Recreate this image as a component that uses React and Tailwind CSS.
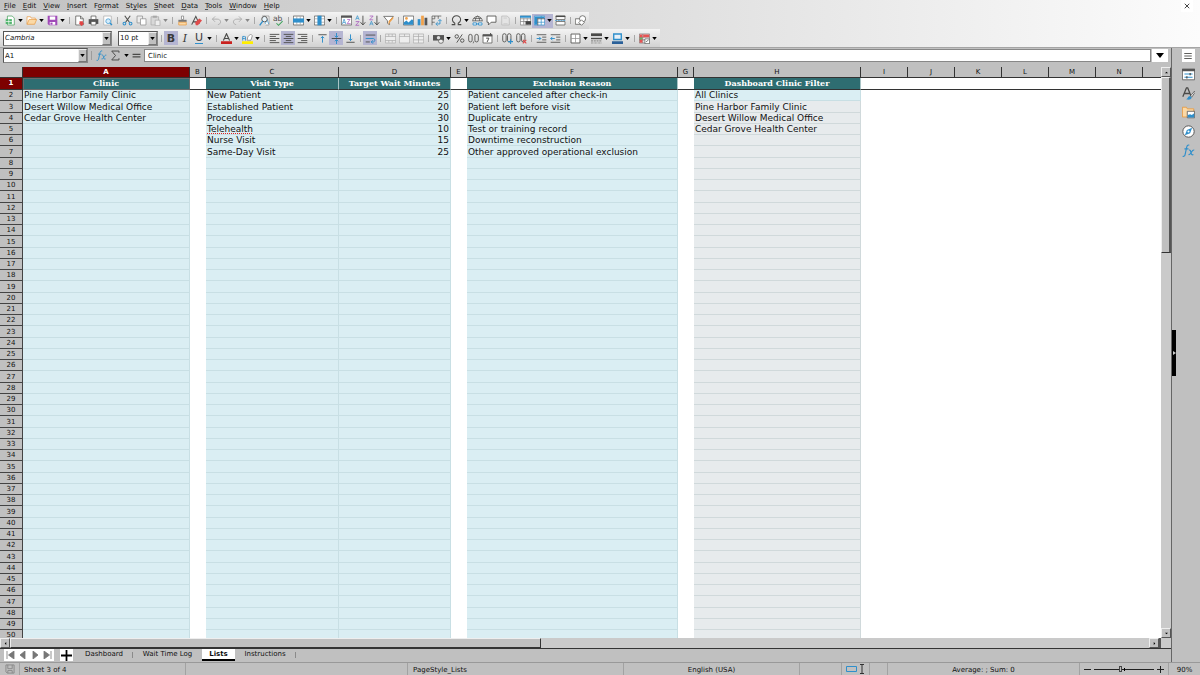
import clsx from "clsx";

const BLUE = "#2f8fcb";
const DARK = "#4a4a48";
const GRAY = "#a8a8a8";

const menus = [
  "File", "Edit", "View", "Insert", "Format", "Styles",
  "Sheet", "Data", "Tools", "Window", "Help",
];

// index of the underlined letter, where it is not the first one
const accessKeys = { Format: 1, Styles: 2 };

const paths = {
  newDoc: (
    <>
      <path d="M3.500 1.500h7l3 3v10h-10z" fill="#fff" stroke="#3f9c55" />
      <path d="M1 6h9v7H1z" fill="#4db36a" />
      <path d="M1 9.500h9M5.500 6v7" stroke="#fff" />
    </>
  ),
  open: (
    <>
      <path d="M1.500 13.500v-11h5l1 2h6v3" fill="#fff" stroke="#e8963a" />
      <path d="M1.500 13.500l3-7h11l-3 7z" fill="#fbd9a6" stroke="#e8963a" />
    </>
  ),
  save: (
    <>
      <path d="M1 1h14v14H3l-2-2z" fill="#a04bb8" />
      <path d="M4 2h8v5H4zM4 10h8v4H4z" fill="#fff" />
      <path d="M5 11h3v3H5z" fill="#a04bb8" />
    </>
  ),
  pdf: (
    <>
      <path d="M2.500 1.500h7l4 4v9h-11z" fill="#fff" stroke={DARK} />
      <path d="M9.500 1.500v4h4" fill="none" stroke={DARK} />
      <path d="M8 9h5v3h2l-4 4-4-4h1z" fill="#e04444" />
    </>
  ),
  print: (
    <>
      <path d="M4.500 6V1.500h7V6" fill="#fff" stroke={DARK} />
      <path d="M1 6h14v7H1z" fill="#555" />
      <path d="M4.500 9.500h7v5h-7z" fill="#fff" stroke={DARK} />
    </>
  ),
  preview: (
    <>
      <path d="M2.500 1.500h11v13h-11z" fill="#fff" stroke={GRAY} />
      <circle cx="9" cy="9" r="3.500" fill="#d5ecfa" stroke={BLUE} />
      <path d="M11.500 11.500l3 3" stroke={BLUE} strokeWidth="2" />
    </>
  ),
  cut: (
    <>
      <path d="M4 1l7 10M12 1L5 11" stroke={DARK} strokeWidth="1.500" />
      <circle cx="3.500" cy="12.500" r="2" fill="none" stroke={BLUE} strokeWidth="1.500" />
      <circle cx="12.500" cy="12.500" r="2" fill="none" stroke={BLUE} strokeWidth="1.500" />
    </>
  ),
  copy: (
    <>
      <path d="M1.500 1.500h8v10h-8z" fill="#eee" stroke="#888" />
      <path d="M6.500 5.500h8v9h-8z" fill="#fff" stroke="#888" />
    </>
  ),
  paste: (
    <>
      <path d="M1.500 2.500h11v12h-11z" fill="#d8d8d8" stroke={GRAY} />
      <path d="M4 1h6v3H4z" fill={GRAY} />
      <path d="M7.500 7.500h7v8h-7z" fill="#eee" stroke={GRAY} />
    </>
  ),
  clone: (
    <>
      <path d="M6.500 1.500h3v5h-3z" fill="#fff" stroke="#777" />
      <path d="M2 7h12v3H2z" fill="#777" />
      <path d="M2.500 10.500h11v4h-11z" fill="#fbd9a6" stroke="#e8963a" />
    </>
  ),
  clear: (
    <>
      <path d="M1 14L7 2l5 11M3 10h6" fill="none" stroke={DARK} strokeWidth="1.500" />
      <path d="M6 11l6-6 4 3-6 7H7z" fill="#e04b4b" />
    </>
  ),
  undo: <path d="M6 2L2 6l4 4M2 6h7c3 0 5 2 5 4s-2 4-4 4" fill="none" stroke={GRAY} strokeWidth="1.200" />,
  redo: <path d="M10 2l4 4-4 4M14 6H7C4 6 2 8 2 10s2 4 4 4" fill="none" stroke={GRAY} strokeWidth="1.200" />,
  find: (
    <>
      <path d="M4.500 1.500h10v13h-5" fill="#fff" stroke="#888" />
      <path d="M9 13l2.500-7 2.500 7" fill="none" stroke={BLUE} />
      <circle cx="8" cy="6" r="4" fill="#e8f4fb" stroke={DARK} strokeWidth="1.300" />
      <path d="M5.500 9L1 15" stroke={BLUE} strokeWidth="2" />
    </>
  ),
  spell: (
    <>
      <text x="0" y="9" fontSize="11" fill={DARK}>ab</text>
      <path d="M5 12l3 3 6-6" fill="none" stroke="#3fa35b" strokeWidth="1.500" />
    </>
  ),
  row: (
    <>
      <path d="M.5 1.500h15v13H.5z" fill="#fff" stroke={DARK} />
      <path d="M5.500 2v12M10.500 2v12" stroke="#999" />
      <path d="M0 5h16v6H0z" fill={BLUE} />
    </>
  ),
  column: (
    <>
      <path d="M.5 1.500h15v13H.5z" fill="#fff" stroke={DARK} />
      <path d="M1 5.500h14M1 10.500h14" stroke="#999" />
      <path d="M5 1h6v14H5z" fill={BLUE} />
    </>
  ),
  sort: (
    <>
      <path d="M.5 1.500h15v13H.5z" fill="#fff" stroke={DARK} />
      <path d="M0 1h16v3H0z" fill="#555" />
      <path d="M2 13l2.500-7L7 13M3 11h3" fill="none" stroke={BLUE} />
      <path d="M9 6.500h4L9 12.500h5" fill="none" stroke="#a04bb8" />
    </>
  ),
  sortAsc: (
    <>
      <path d="M1 7l2.500-6L6 7M2 5h3" fill="none" stroke={BLUE} />
      <path d="M1 9.500h5L1 15h5" fill="none" stroke="#a04bb8" />
      <path d="M11.500 1v13M8 10.500l3.500 4 3.500-4" fill="none" stroke={DARK} strokeWidth="1.300" />
    </>
  ),
  sortDesc: (
    <>
      <path d="M1 1.500h5L1 7h5" fill="none" stroke="#a04bb8" />
      <path d="M1 15l2.500-6L6 15M2 13h3" fill="none" stroke={BLUE} />
      <path d="M11.500 1v13M8 10.500l3.500 4 3.500-4" fill="none" stroke={DARK} strokeWidth="1.300" />
    </>
  ),
  filter: (
    <>
      <path d="M1 2h14L9.500 8.500V14l-3-2V8.500z" fill="#fff" stroke={DARK} />
      <path d="M8 9l7-7v3l-5 6-2 4z" fill="#f0a24c" />
    </>
  ),
  image: (
    <>
      <path d="M.5 1.500h15v13H.5z" fill="#fff" stroke={DARK} />
      <circle cx="5" cy="5" r="2" fill="#f0a24c" />
      <path d="M1 14v-3l4-3 3 3 5-5 2 2v6z" fill={BLUE} />
    </>
  ),
  chart: (
    <>
      <path d="M1 6h4v9H1z" fill={BLUE} />
      <path d="M6 1h4v14H6z" fill="#f0a24c" />
      <path d="M11 4h4v11h-4z" fill="#555" />
    </>
  ),
  pivot: (
    <>
      <path d="M1.500 15V1.500H15M1.500 5.500h4M5.500 1.500v4M1.500 10.500h4M10.500 1.500v4" fill="none" stroke={DARK} />
      <path d="M8 13h5V7M10.500 9L13 6.500 15.500 9M9.500 10.500L7 13l2.500 2.500" fill="none" stroke={BLUE} strokeWidth="1.300" />
    </>
  ),
  omega: <path d="M1 14h4.500v-2C3 10.500 2 9 2 7a6 6 0 0 1 12 0c0 2-1 3.500-3.500 5v2H15" fill="none" stroke={DARK} strokeWidth="1.500" />,
  link: (
    <>
      <path d="M1 9a7 7 0 0 1 14 0M1 8.500h14M5 8.500c0-4 1-6 3-7 2 1 3 3 3 7M2.500 5h11" fill="none" stroke={DARK} />
      <path d="M1.500 11.500h5v3h-5zM9.500 11.500h5v3h-5zM6 13h4" fill="#fff" stroke={BLUE} strokeWidth="1.300" />
    </>
  ),
  comment: <path d="M1.500 1.500h13v9h-7l-4 4v-4h-2z" fill="#fff" stroke={DARK} strokeWidth="1.200" />,
  headerFooter: (
    <>
      <path d="M2.500 1.500h8l3 3v10h-11z" fill="#e4e4e4" stroke="#b5b5b5" />
      <path d="M5 4.500h5M5 12.500h6" stroke="#c4c4c4" />
    </>
  ),
  printArea: (
    <>
      <path d="M.5 1.500h15v13H.5zM.5 5.500h15M.5 9.500h15M5.500 5v9M10.500 5v9" fill="#fff" stroke="#777" />
      <path d="M0 1h16v3H0z" fill={BLUE} />
      <path d="M8 9h8v5H8z" fill="#444" />
    </>
  ),
  freeze: (
    <>
      <path d="M.5 1.500h15v13H.5zM.5 10.500h15M10.500 1.500v13" fill="#fff" stroke={BLUE} />
      <path d="M1 2h14v3H1zM1 2h4v12H1z" fill={BLUE} />
      <path d="M5.500 5v10M5 5.500h11" stroke={DARK} />
    </>
  ),
  split: (
    <>
      <path d="M1.500 1.500h13v5h-13zM1.500 9.500h13v5h-13z" fill="#fff" stroke={DARK} />
      <path d="M1 1h14v2H1z" fill={DARK} />
      <path d="M0 8h16" stroke={BLUE} strokeDasharray="3 1" />
    </>
  ),
  shapes: (
    <>
      <path d="M.5 5.500h8v8h-8z" fill="#fff" stroke={DARK} />
      <circle cx="11" cy="5.500" r="4.500" fill="#fff" stroke={DARK} />
      <path d="M9.500 7l4 4-4 4-4-4z" fill="#fff" stroke={DARK} />
    </>
  ),
  fontColor: (
    <>
      <path d="M3.500 11L8 1l4.500 10M5 8h6" fill="none" stroke={DARK} strokeWidth="1.600" />
      <path d="M0 12h16v4H0z" fill="#c9211e" />
    </>
  ),
  highlight: (
    <>
      <path d="M1 11V5h3M1 8h3M5 11V5" fill="none" stroke={BLUE} strokeWidth="1.300" />
      <path d="M7.500 10.500l1-5 4-4 2.500 2.500-2 6.500z" fill="#fff" stroke="#777" />
      <path d="M0 12h16v4H0z" fill="#ffee00" />
    </>
  ),
  alignLeft: <path d="M1 2h14M1 5h9M1 8h14M1 11h9M1 14h14" stroke={DARK} strokeWidth="1.300" />,
  alignCenter: <path d="M1 2h14M4 5h8M1 8h14M4 11h8M1 14h14" stroke={DARK} strokeWidth="1.300" />,
  alignRight: <path d="M1 2h14M6 5h9M1 8h14M6 11h9M1 14h14" stroke={DARK} strokeWidth="1.300" />,
  top: (
    <>
      <path d="M2 2.500h12" stroke={DARK} strokeWidth="1.300" />
      <path d="M8 14V5M5.500 7.500L8 5l2.500 2.500" fill="none" stroke={BLUE} strokeWidth="1.400" />
    </>
  ),
  middle: (
    <>
      <path d="M1 8h14" stroke={DARK} strokeWidth="1.400" />
      <path d="M8 0v6M5.500 4L8 6.500 10.500 4M8 16v-6M5.500 12L8 9.500l2.500 2.500" fill="none" stroke={BLUE} strokeWidth="1.400" />
    </>
  ),
  bottom: (
    <>
      <path d="M2 13.500h12" stroke={DARK} strokeWidth="1.300" />
      <path d="M8 2v9M5.500 8.500L8 11l2.500-2.500" fill="none" stroke={BLUE} strokeWidth="1.400" />
    </>
  ),
  wrap: (
    <>
      <path d="M1 3h14M1 13h6" stroke={DARK} strokeWidth="1.300" />
      <path d="M1 8h11c3 0 3 5 0 5H9M11.500 10.500L9 13l2.500 2.500" fill="none" stroke={BLUE} strokeWidth="1.400" />
    </>
  ),
  merge: <path d="M.5 1.500h15v13H.5zM.5 5h15M.5 11h15M5.500 1.500V5M10.500 1.500V5M5.500 11v3M10.500 11v3" fill="#eee" stroke={GRAY} />,
  mergeCells: <path d="M.5 1.500h15v13H.5zM.5 5h15M8 1.500V5" fill="#eee" stroke={GRAY} />,
  splitCells: <path d="M.5 1.500h15v13H.5zM.5 5h15M.5 10h15M8 1.500v13" fill="#eee" stroke={GRAY} />,
  currency: (
    <>
      <path d="M0 3h16v8H0z" fill="#555" />
      <circle cx="8" cy="7" r="2.500" fill="#ddd" />
      <ellipse cx="11.500" cy="12" rx="3.500" ry="3" fill="#eee" stroke={DARK} />
    </>
  ),
  percent: (
    <>
      <circle cx="4" cy="5" r="2.500" fill="none" stroke={DARK} strokeWidth="1.300" />
      <circle cx="12" cy="11" r="2.500" fill="none" stroke={DARK} strokeWidth="1.300" />
      <path d="M12 2L4 14" stroke={DARK} strokeWidth="1.300" />
    </>
  ),
  number: (
    <>
      <rect x="1" y="2" width="5" height="11" rx="2.500" fill="none" stroke={DARK} strokeWidth="1.200" />
      <rect x="10" y="2" width="5" height="11" rx="2.500" fill="none" stroke={DARK} strokeWidth="1.200" />
      <path d="M8.500 12l-1 3" stroke={DARK} />
    </>
  ),
  date: (
    <>
      <path d="M1.500 2.500h13v12h-13z" fill="#fff" stroke={DARK} />
      <path d="M1 2h14v3H1z" fill="#555" />
      <path d="M6 7.500h4L7.500 13M12.500 0v3" fill="none" stroke={DARK} strokeWidth="1.400" />
    </>
  ),
  addDecimal: (
    <>
      <rect x="1" y="1" width="5" height="12" rx="2.500" fill="none" stroke={DARK} strokeWidth="1.200" />
      <rect x="8" y="1" width="5" height="12" rx="2.500" fill="none" stroke={DARK} strokeWidth="1.200" />
      <path d="M12.500 9v7M9 12.500h7" stroke={BLUE} strokeWidth="1.600" />
    </>
  ),
  removeDecimal: (
    <>
      <rect x="1" y="1" width="5" height="12" rx="2.500" fill="none" stroke={DARK} strokeWidth="1.200" />
      <rect x="8" y="1" width="5" height="12" rx="2.500" fill="none" stroke={DARK} strokeWidth="1.200" />
      <path d="M10 10l5 5M15 10l-5 5" stroke="#e04444" strokeWidth="1.500" />
    </>
  ),
  indent: (
    <>
      <path d="M1 2.500h14M9 6h6M9 10h6M1 13.500h14" stroke={DARK} strokeWidth="1.200" />
      <path d="M1 8h6M4.500 5.500L7 8l-2.500 2.500" fill="none" stroke={BLUE} strokeWidth="1.400" />
    </>
  ),
  outdent: (
    <>
      <path d="M1 2.500h14M9 6h6M9 10h6M1 13.500h14" stroke={DARK} strokeWidth="1.200" />
      <path d="M1 8h6M3.500 5.500L1 8l2.500 2.500" fill="none" stroke={BLUE} strokeWidth="1.400" />
    </>
  ),
  borders: (
    <>
      <path d="M1.500 1.500h13v13h-13z" fill="#fff" stroke={DARK} strokeWidth="1.200" />
      <path d="M8 2v12M2 8h12" stroke="#888" />
    </>
  ),
  borderStyle: (
    <>
      <path d="M0 2.500h16" stroke={DARK} strokeWidth="4" />
      <path d="M0 8h16" stroke={DARK} strokeWidth="2" />
      <path d="M0 11.500h16" stroke={DARK} strokeDasharray="3 1" />
      <path d="M0 14.500h16" stroke={DARK} strokeDasharray="1 1" />
    </>
  ),
  borderColor: (
    <>
      <path d="M2.500 1.500h11v8h-11z" fill="#e8f1f8" stroke={BLUE} strokeWidth="2" />
      <path d="M0 12h16v4H0z" fill="#2a6099" />
    </>
  ),
  conditional: (
    <>
      <path d="M.5 1.500h15v13H.5zM5.500 1.500v13M.5 6h15M.5 10h15" fill="#fff" stroke="#666" />
      <path d="M1 2h4v12H1zM6 2h9v4H6z" fill="#e55353" />
      <path d="M1 6.500h4v3H1z" fill="#5cb56f" />
      <path d="M8.500 8.500h7v7h-7zM10 13l4-3" fill="#fff" stroke={DARK} />
    </>
  ),
  properties: (
    <>
      <path d="M.5 1.500h15v13H.5z" fill="#fff" stroke="#555" />
      <path d="M0 1h16v3H0z" fill="#555" />
      <path d="M3 7.500h10M3 11.500h10" stroke={BLUE} strokeWidth="1.300" />
      <path d="M10 6v3M6 10v3" stroke={DARK} strokeWidth="1.500" />
    </>
  ),
  styles: (
    <>
      <path d="M1 12L5.500 1H7l4 10M3 8h6" fill="none" stroke={DARK} strokeWidth="1.600" />
      <path d="M15.500 5l-5 6 1.500 1.500 4-6z" fill="#fff" stroke="#555" />
      <path d="M5 15c2 0 2-4 5-4l2 2c-1 3-4 3-7 2z" fill={BLUE} />
    </>
  ),
  gallery: (
    <>
      <path d="M.5 13.500v-12h5l1 2h8v10z" fill="#fbd9a6" stroke="#e8963a" />
      <path d="M6.500 6.500h9v8h-9z" fill="#fff" stroke="#555" />
      <path d="M7 14v-3l3-1 2 1 3-2v5z" fill={BLUE} />
    </>
  ),
  navigator: (
    <>
      <circle cx="8" cy="8" r="7" fill="#fff" stroke="#555" strokeWidth="1.200" />
      <path d="M12.500 3.500L10 10l-6.500 2.500L6 6z" fill={BLUE} />
      <circle cx="8" cy="8" r="1.300" fill="#fff" />
    </>
  ),
  functions: (
    <>
      <path d="M9 1.500C6.500.5 6 3 5.500 5L3.800 13c-.4 2-1.500 2.500-3 2M3 6h5" fill="none" stroke={BLUE} strokeWidth="1.400" />
      <path d="M8.500 7.500c2-.5 2 1 2.500 3s1 3.500 3 2.500M15 7.500c-2-.5-3 2-4 3.500s-1.500 2.500-3 2" fill="none" stroke={BLUE} strokeWidth="1.400" />
    </>
  ),
  sigma: <path d="M13 4V1.500H2.500L8 8l-5.500 6.500H13V12" fill="none" stroke={DARK} strokeWidth="1.400" />,
  equals: <path d="M1 6h14M1 10.500h14" stroke={DARK} strokeWidth="2" />,
  menu: <path d="M2 4h12M2 8h12M2 12h12" stroke={DARK} strokeWidth="1.400" />,
};

// "|" is a separator; [icon, label, flags]: c = caret, p = pressed, d = disabled
const standardBar = [
  ["newDoc", "New", "c"], ["open", "Open", "c"], ["save", "Save", "c"], "|",
  ["pdf", "Export as PDF"], ["print", "Print"], ["preview", "Print Preview"], "|",
  ["cut", "Cut"], ["copy", "Copy"], ["paste", "Paste", "cd"], "|",
  ["clone", "Clone Formatting"], ["clear", "Clear Formatting"], "|",
  ["undo", "Undo", "cd"], ["redo", "Redo", "cd"], "|",
  ["find", "Find and Replace"], ["spell", "Spelling"], "|",
  ["row", "Row", "c"], ["column", "Column", "c"], "|",
  ["sort", "Sort"], ["sortAsc", "Sort Ascending"], ["sortDesc", "Sort Descending"], ["filter", "AutoFilter"], "|",
  ["image", "Insert Image"], ["chart", "Insert Chart"], ["pivot", "Pivot Table"], "|",
  ["omega", "Special Character", "c"], ["link", "Hyperlink"], ["comment", "Comment"], ["headerFooter", "Headers and Footers", "d"], "|",
  ["printArea", "Print Area"], ["freeze", "Freeze Rows and Columns", "cp"], ["split", "Split Window"], "|",
  ["shapes", "Draw Functions"],
];

const formatBar = [
  ["B", "Bold", "p"], ["I", "Italic"], ["U", "Underline", "c"], "|",
  ["fontColor", "Font Color", "c"], ["highlight", "Background Color", "c"], "|",
  ["alignLeft", "Align Left"], ["alignCenter", "Align Center", "p"], ["alignRight", "Align Right"], "|",
  ["top", "Align Top"], ["middle", "Center Vertically", "p"], ["bottom", "Align Bottom"], "|",
  ["wrap", "Wrap Text", "p"], "|",
  ["merge", "Merge and Center", "d"], ["mergeCells", "Merge Cells", "d"], ["splitCells", "Split Cells", "d"], "|",
  ["currency", "Currency", "c"], ["percent", "Percent"], ["number", "Number"], ["date", "Date"], "|",
  ["addDecimal", "Add Decimal Place"], ["removeDecimal", "Delete Decimal Place"], "|",
  ["indent", "Increase Indent"], ["outdent", "Decrease Indent"], "|",
  ["borders", "Borders", "c"], ["borderStyle", "Border Style", "c"], ["borderColor", "Border Color", "c"], "|",
  ["conditional", "Conditional Formatting", "c"],
];

const letterStyles = {
  B: "font-bold",
  I: "font-['DejaVu_Serif'] italic",
  U: "border-b border-[#2f8fcb]",
};

const columns = [
  { id: "A", width: "w-[167px]", title: "Clinic", values: ["Pine Harbor Family Clinic", "Desert Willow Medical Office", "Cedar Grove Health Center"] },
  { id: "B", width: "w-[16px]" },
  { id: "C", width: "w-[133px]", title: "Visit Type", values: ["New Patient", "Established Patient", "Procedure", "Telehealth", "Nurse Visit", "Same-Day Visit"] },
  { id: "D", width: "w-[112px]", title: "Target Wait Minutes", right: true, values: [25, 20, 30, 10, 15, 25] },
  { id: "E", width: "w-[16px]" },
  { id: "F", width: "w-[211px]", title: "Exclusion Reason", values: ["Patient canceled after check-in", "Patient left before visit", "Duplicate entry", "Test or training record", "Downtime reconstruction", "Other approved operational exclusion"] },
  { id: "G", width: "w-[16px]" },
  { id: "H", width: "w-[167px]", title: "Dashboard Clinic Filter", muted: true, values: ["All Clinics", "Pine Harbor Family Clinic", "Desert Willow Medical Office", "Cedar Grove Health Center"] },
  { id: "I", width: "w-[47px]" },
  { id: "J", width: "w-[47px]" },
  { id: "K", width: "w-[47px]" },
  { id: "L", width: "w-[47px]" },
  { id: "M", width: "w-[47px]" },
  { id: "N", width: "w-[47px]" },
];

const rows = Array.from({ length: 49 }, (_, i) => i + 2);
const misspelled = ["Telehealth"];

function Icon({ name, className = "size-[11px]" }) {
  return (
    <svg viewBox="0 0 16 16" className={clsx("shrink-0", className)} aria-hidden="true">
      {paths[name]}
    </svg>
  );
}

function Caret({ faded }) {
  return (
    <svg viewBox="0 0 6 4" className={clsx("h-[3px] w-[5px]", faded && "opacity-40")} aria-hidden="true">
      <path d="M0 0h6L3 4z" fill="#000" />
    </svg>
  );
}

function ToolItems({ items }) {
  return items.map((item, i) => {
    if (item === "|") {
      return (
        <span key={i} className="flex w-[6px] shrink-0 justify-center">
          <span className="h-[7px] w-px bg-[#a8a8a8]" />
        </span>
      );
    }
    const [icon, label, flags = ""] = item;
    const pressed = flags.includes("p");
    const disabled = flags.includes("d");
    return (
      <span key={i} className={clsx("flex shrink-0", pressed && "bg-[#b5b5d2]")}>
        <button
          type="button"
          aria-label={label}
          disabled={disabled}
          className="flex h-[14px] w-[14px] items-center justify-center"
        >
          {letterStyles[icon] ? (
            <span className={clsx("text-[11px] leading-[11px] text-[#3a3a38]", letterStyles[icon])}>{icon}</span>
          ) : (
            <Icon name={icon} />
          )}
        </button>
        {flags.includes("c") && (
          <button type="button" aria-label={`${label} options`} className="flex w-[7px] items-center justify-center">
            <Caret faded={disabled} />
          </button>
        )}
      </span>
    );
  });
}

function Combo({ label, value, className, inputClass }) {
  return (
    <div className={clsx("flex h-[15px] shrink-0 border border-[#555] border-r-[#888] border-b-[#888] bg-white", className)}>
      <input
        aria-label={label}
        defaultValue={value}
        className={clsx("min-w-0 flex-1 px-px text-[7px] leading-[12px] outline-none", inputClass)}
      />
      <button
        type="button"
        aria-label={`${label} list`}
        className="flex w-[9px] items-center justify-center border border-[#eee] border-r-[#777] border-b-[#777] bg-[#c0c0c0]"
      >
        <Caret />
      </button>
    </div>
  );
}

function MenuLabel({ text }) {
  const at = accessKeys[text] ?? 0;
  return (
    <>
      {text.slice(0, at)}
      <u className="decoration-[#555]">{text[at]}</u>
      {text.slice(at + 1)}
    </>
  );
}

function TopBars() {
  return (
    <header className="h-[48px] shrink-0 border-b border-[#a5a5a5] bg-linear-to-r from-[#c2c2c2] via-[#dcdcdc] to-[#fcfcfc]">
      <nav className="flex h-[12px] items-center pr-[7px] pl-[4px]">
        <div className="flex flex-1 gap-[7px]">
          {menus.map((menu) => (
            <button key={menu} type="button" className="text-[7px] leading-[10px]">
              <MenuLabel text={menu} />
            </button>
          ))}
        </div>
        <button type="button" aria-label="Close" className="flex size-[12px] items-center justify-center bg-white">
          <svg viewBox="0 0 8 8" className="size-[6px]">
            <path d="M1 1l6 6M7 1L1 7" stroke="#333" strokeWidth="1.200" />
          </svg>
        </button>
      </nav>
      <div className="flex h-[17px] w-fit items-center bg-linear-to-b from-[#f4f4f4] to-[#d2d2d2] pr-[2px] pl-[3px]">
        <ToolItems items={standardBar} />
      </div>
      <div className="flex h-[18px] w-fit items-center bg-linear-to-b from-[#f4f4f4] to-[#d2d2d2] pr-[2px] pl-[3px]">
        <Combo label="Font Name" value="Cambria" className="mr-[6px] w-[109px]" inputClass="italic" />
        <Combo label="Font Size" value="10 pt" className="w-[40px]" />
        <ToolItems items={["|", ...formatBar]} />
      </div>
    </header>
  );
}

function FormulaBar() {
  return (
    <div className="flex h-[19px] shrink-0 items-start bg-[#c0c0c0] px-[3px]">
      <Combo label="Name Box" value="A1" className="w-[85px]" />
      <div className="flex h-[15px] flex-1 items-center">
        <span className="ml-[3px] h-[9px] w-px bg-[#9c9c9c]" />
        <button type="button" aria-label="Function Wizard" className="ml-[3px] flex w-[13px] justify-center">
          <Icon name="functions" />
        </button>
        <button type="button" aria-label="Select Function" className="flex w-[14px] justify-center">
          <Icon name="sigma" />
        </button>
        <button type="button" aria-label="Select Function options" className="flex w-[8px] justify-center">
          <Caret />
        </button>
        <button type="button" aria-label="Formula" className="mr-px flex w-[13px] justify-center">
          <Icon name="equals" className="size-[9px]" />
        </button>
        <input
          aria-label="Input line"
          defaultValue="Clinic"
          className="h-[13px] min-w-0 flex-1 border border-[#888] bg-white px-[3px] text-[7px] leading-[11px] outline-none"
        />
        <button type="button" aria-label="Expand Formula Bar" className="ml-px flex h-[13px] w-[16px] items-center justify-center bg-white">
          <svg viewBox="0 0 8 5" className="h-[5px] w-[8px]">
            <path d="M0 0h8L4 5z" />
          </svg>
        </button>
      </div>
    </div>
  );
}

function Cell({ column, row }) {
  if (!column.title) return <td className="bg-white" />;
  const value = column.values[row - 2];
  return (
    <td
      className={clsx(
        "overflow-hidden border-r border-b p-0 px-px text-[9px] leading-[10px] whitespace-nowrap",
        column.muted && row > 2 ? "border-[#d0d9db] bg-[#e7ebed]" : "border-[#c8dfe4] bg-[#daeef3]",
        column.right && "text-right"
      )}
    >
      {misspelled.includes(value) ? (
        <span className="underline decoration-[#e02020] decoration-dotted decoration-1 underline-offset-1 [text-decoration-skip-ink:none]">
          {value}
        </span>
      ) : (
        value
      )}
    </td>
  );
}

function Sheet() {
  return (
    <div className="min-h-0 min-w-0 flex-1 overflow-hidden bg-white">
      <table className="w-full table-fixed border-separate border-spacing-0">
        <colgroup>
          <col className="w-[23px]" />
          {columns.map((column) => (
            <col key={column.id} className={column.width} />
          ))}
          <col />
        </colgroup>
        <thead>
          <tr className="h-[11px] bg-[#c0c0c0] text-[7px] leading-[10px]">
            <td className="border-r border-b border-[#333] p-0" />
            {columns.map((column) => (
              <th
                key={column.id}
                scope="col"
                className={clsx(
                  "border-r border-b border-[#333] p-0",
                  column.id === "A" ? "bg-[#7d0000] font-bold text-white" : "font-normal"
                )}
              >
                {column.id}
              </th>
            ))}
            <td className="border-b border-[#333] p-0" />
          </tr>
        </thead>
        <tbody>
          <tr className="h-[12px] align-top">
            <th scope="row" className="border-r border-b border-[#333] bg-[#7d0000] p-0 text-[7px] leading-[10px] text-white">
              1
            </th>
            {columns.map((column) => (
              <td
                key={column.id}
                className={clsx(
                  "border-b border-[#333] p-0 text-center font-['DejaVu_Serif'] text-[8px] leading-[10px] font-bold whitespace-nowrap",
                  column.title && "border-r border-r-[#a9c4c6] bg-[#2e6d71] text-white",
                  column.id === "A" && "outline -outline-offset-1 outline-[#6a6a6a]"
                )}
              >
                {column.title}
              </td>
            ))}
            <td className="border-b border-[#333] p-0" />
          </tr>
          {rows.map((row) => (
            <tr key={row} className={row % 4 === 3 ? "h-[12px]" : "h-[11px]"}>
              <th scope="row" className="border-r border-b border-[#444] bg-[#c0c0c0] p-0 text-[7px] leading-[10px] font-normal">
                {row}
              </th>
              {columns.map((column) => (
                <Cell key={column.id} column={column} row={row} />
              ))}
              <td />
            </tr>
          ))}
        </tbody>
      </table>
    </div>
  );
}

function ScrollButton({ label, d }) {
  return (
    <button
      type="button"
      aria-label={label}
      className="flex size-[10px] shrink-0 items-center justify-center border border-[#eee] border-r-[#555] border-b-[#555] bg-[#c0c0c0]"
    >
      <svg viewBox="0 0 4 4" className="size-[3px]">
        <path d={d} />
      </svg>
    </button>
  );
}

function VerticalScroll() {
  return (
    <div className="flex w-[10px] shrink-0 flex-col bg-[#cacaca]">
      <ScrollButton label="Scroll up" d="M0 3h4L2 1z" />
      <div className="flex-1">
        <div className="h-[32%] border border-t-[#eee] border-r-2 border-r-[#555] border-b-[#333] border-l-[#eee] bg-[#c0c0c0]" />
      </div>
      <ScrollButton label="Scroll down" d="M0 1h4L2 3z" />
    </div>
  );
}

function HorizontalScroll() {
  return (
    <div className="flex h-[10px] shrink-0 bg-[#cacaca] pr-[10px]">
      <ScrollButton label="Scroll left" d="M3 0v4L1 2z" />
      <div className="flex flex-1">
        <div className="flex-[53] border border-t-[#eee] border-r-[#333] border-b-[#333] border-l-[#eee] bg-[#c0c0c0]" />
        <div className="flex-[61]" />
      </div>
      <ScrollButton label="Scroll right" d="M1 0v4l2-2z" />
      <span className="w-[2px] bg-[#555]" />
    </div>
  );
}

const sheetNav = [
  ["First sheet", "M1 0v8M8 0v8L2.500 4z"],
  ["Previous sheet", "M7 0v8L2 4z"],
  ["Next sheet", "M2 0v8l5-4z"],
  ["Last sheet", "M8 0v8M1 0v8l5.500-4z"],
];

function SheetTabs() {
  return (
    <div className="flex h-[14px] shrink-0 items-start border-t border-[#333] bg-[#c0c0c0] pl-[4px] text-[7px] leading-[11px]">
      <div className="flex h-[12px] w-[50px] bg-white">
        {sheetNav.map(([label, d]) => (
          <button key={label} type="button" aria-label={label} className="flex flex-1 items-center justify-center">
            <svg viewBox="0 0 9 8" className="h-[8px] w-[9px]">
              <path d={d} fill="#777" stroke="#777" strokeWidth="0.800" />
            </svg>
          </button>
        ))}
      </div>
      <button type="button" aria-label="Add sheet" className="ml-[6px] flex h-[12px] w-[13px] items-center justify-center bg-white">
        <svg viewBox="0 0 10 10" className="size-[11px]">
          <path d="M5 0v10M0 5h10" stroke="#000" strokeWidth="1.600" />
        </svg>
      </button>
      <button type="button" className="ml-[3px] w-[56px] text-center">Dashboard</button>
      <span className="mt-[3px] h-[6px] w-px bg-[#8a8a8a]" />
      <button type="button" className="w-[69px] text-center">Wait Time Log</button>
      <button type="button" className="h-[12px] w-[33px] border-b-2 border-black bg-white text-center font-bold">Lists</button>
      <button type="button" className="w-[60px] text-center">Instructions</button>
      <span className="mt-[3px] h-[6px] w-px bg-[#8a8a8a]" />
    </div>
  );
}

const deck = ["properties", "styles", "gallery", "navigator", "functions"];

function Sidebar() {
  return (
    <aside className="relative flex w-[29px] shrink-0 flex-col items-center gap-[5px] border-l border-[#666] bg-[#c0c0c0] pt-px pl-[4px]">
      <button type="button" aria-label="Sidebar Settings" className="flex size-[13px] items-center justify-center bg-white">
        <Icon name="menu" className="size-[10px]" />
      </button>
      {deck.map((name) => (
        <button key={name} type="button" aria-label={name} className="flex h-[14px] items-center">
          <Icon name={name} className="size-[13px]" />
        </button>
      ))}
      <button
        type="button"
        aria-label="Show sidebar"
        className="absolute top-[46%] left-0 flex h-[46px] w-[4px] items-center justify-center bg-black"
      >
        <svg viewBox="0 0 3 4" className="h-[4px] w-[3px]">
          <path d="M0 0v4l3-2z" fill="#ccc" />
        </svg>
      </button>
    </aside>
  );
}

function StatusBar() {
  return (
    <footer className="flex h-[13px] shrink-0 items-stretch divide-x divide-[#a2a2a2] border-t border-[#999] bg-[#c0c0c0] text-[7px] leading-[14px]">
      <span className="flex w-[20px] items-center justify-center">
        <svg viewBox="0 0 16 16" className="size-[10px]">
          <path d="M1.500 1.500h13v13h-11l-2-2zM4.500 1.500v6h7v-6M4.500 14.500v-4h7v4" fill="none" stroke="#888" strokeWidth="1.500" />
        </svg>
      </span>
      <span className="w-[166px] pl-[4px]">Sheet 3 of 4</span>
      <span className="w-[222px]" />
      <span className="w-[216px] pl-[5px]">PageStyle_Lists</span>
      <span className="w-[176px] text-center">English (USA)</span>
      <span className="flex-1" />
      <span className="flex w-[28px] items-center justify-center">
        <svg viewBox="0 0 20 10" className="h-[10px] w-[20px]">
          <path d="M.5 2.500h10v5H.500z" fill="none" stroke={BLUE} />
          <path d="M14 .5h4M14 9.500h4M16 .5v9" stroke="#333" fill="none" />
        </svg>
      </span>
      <span className="w-[18px]" />
      <span className="w-[192px] text-center">Average: ; Sum: 0</span>
      <span className="flex w-[89px] items-center justify-center gap-[3px]">
        <button type="button" aria-label="Zoom out" className="flex w-[7px]">
          <svg viewBox="0 0 7 7" className="size-[7px]"><path d="M0 3.500h7" stroke="#222" /></svg>
        </button>
        <span className="relative flex h-[9px] w-[60px] items-center">
          <span className="h-px w-full bg-[#222]" />
          <span className="absolute left-[30px] h-[3px] w-px bg-black" />
          <input
            type="range"
            aria-label="Zoom"
            min="20"
            max="170"
            defaultValue="85"
            className="absolute inset-0 h-[9px] w-full appearance-none bg-transparent [&::-webkit-slider-thumb]:h-[6px] [&::-webkit-slider-thumb]:w-[3px] [&::-webkit-slider-thumb]:appearance-none [&::-webkit-slider-thumb]:border [&::-webkit-slider-thumb]:border-[#444] [&::-webkit-slider-thumb]:bg-[#c0c0c0]"
          />
        </span>
        <button type="button" aria-label="Zoom in" className="flex w-[7px]">
          <svg viewBox="0 0 7 7" className="size-[7px]"><path d="M0 3.500h7M3.500 0v7" stroke="#222" /></svg>
        </button>
      </span>
      <span className="w-[31px] text-center">90%</span>
    </footer>
  );
}

export default function App() {
  return (
    <div className="flex h-screen flex-col overflow-hidden bg-[#c0c0c0] font-['DejaVu_Sans',sans-serif] text-[#111]">
      <TopBars />
      <div className="flex min-h-0 flex-1">
        <main className="flex min-w-0 flex-1 flex-col">
          <FormulaBar />
          <div className="flex min-h-0 flex-1">
            <Sheet />
            <VerticalScroll />
          </div>
          <HorizontalScroll />
          <SheetTabs />
        </main>
        <Sidebar />
      </div>
      <StatusBar />
    </div>
  );
}
